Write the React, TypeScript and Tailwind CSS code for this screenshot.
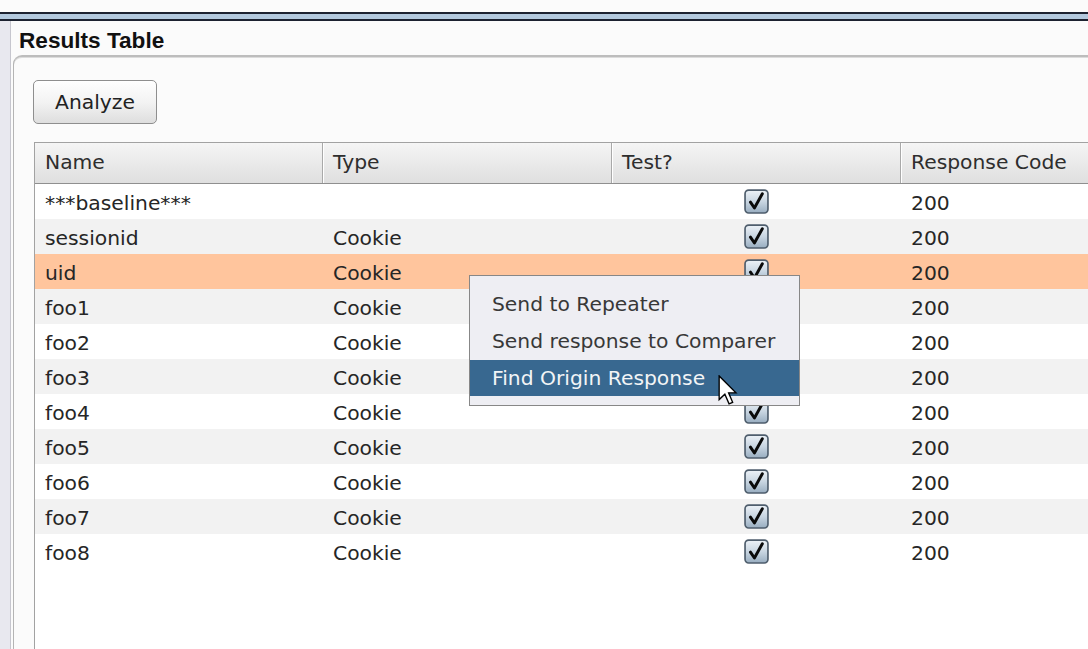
import React from "react";

const rows: { name: string; type: string }[] = [
  { name: "***baseline***", type: "" },
  { name: "sessionid", type: "Cookie" },
  { name: "uid", type: "Cookie" },
  { name: "foo1", type: "Cookie" },
  { name: "foo2", type: "Cookie" },
  { name: "foo3", type: "Cookie" },
  { name: "foo4", type: "Cookie" },
  { name: "foo5", type: "Cookie" },
  { name: "foo6", type: "Cookie" },
  { name: "foo7", type: "Cookie" },
  { name: "foo8", type: "Cookie" },
];

function CheckBox() {
  return (
    <svg width="25" height="25" viewBox="0 0 24 24">
      <defs>
        <linearGradient id="cbg" x1="0" y1="0" x2="0" y2="1">
          <stop offset="0" stopColor="#edf2f7" />
          <stop offset="0.5" stopColor="#c9d6e2" />
          <stop offset="1" stopColor="#98adc0" />
        </linearGradient>
      </defs>
      <rect x="1" y="1" width="22" height="22" rx="3.5" fill="url(#cbg)" stroke="#4f5e6d" strokeWidth="1.6" />
      <path d="M6.2 12.6 L10 18.2 L17.6 4.6" fill="none" stroke="#0a0a0a" strokeWidth="2.8" strokeLinecap="round" strokeLinejoin="round" />
    </svg>
  );
}

function Cursor() {
  return (
    <svg width="20" height="30" viewBox="0 0 13 20" className="absolute left-[718px] top-[375px]">
      <path d="M0.6 0.6 L0.6 16.4 L4.4 12.8 L7.2 19.2 L9.6 18.2 L6.9 11.9 L11.8 11.9 Z" fill="#ffffff" stroke="#000000" strokeWidth="0.9" strokeLinejoin="miter" />
    </svg>
  );
}

export default function App() {
  return (
    <div className="relative w-[1088px] h-[649px] overflow-hidden bg-[#fbfbfb] font-['DejaVu_Sans',sans-serif] text-[20.3px] text-[#262626]">
      <div className="h-[12px]" />
      <div className="h-[9px] border-y-2 border-[#1c2230] bg-[#b3c9de]" />
      <div className="flex h-[628px]">
        <div className="w-[11px] shrink-0 bg-[#e8e8ef] border-r border-[#c6c6ce]" />
        <div className="flex flex-1 flex-col min-w-0">
          <div className="h-[34px] shrink-0 pl-[8px] pt-[7px]">
            <div className="font-['Liberation_Sans',sans-serif] font-bold text-[22.6px] leading-[26px] text-[#111]">
              Results Table
            </div>
          </div>
          <div className="ml-[2px] flex flex-1 flex-col min-h-0 rounded-tl-[9px] border-l border-t-2 border-l-[#b4b4b4] border-t-[#bdbdbd] shadow-[inset_0_1px_0_#dcdcdc] pl-[20px] pt-[23px]">
            <button className="-ml-px h-[44px] w-[124px] shrink-0 rounded-[5px] border border-[#8e8e8e] bg-gradient-to-b from-[#fefefe] via-[#f3f3f3] to-[#dedede] text-[20.3px] text-[#222] shadow-[inset_0_1px_0_#ffffff]">
              Analyze
            </button>
            <div className="mt-[18px] flex flex-1 flex-col w-[1160px] border-l border-t border-[#a2a2a2] bg-white">
              <div className="flex h-[41px] shrink-0 border-b border-[#8f8f8f] bg-gradient-to-b from-[#f5f5f5] to-[#dfdfdf] text-[#2e2e2e]">
                <div className="flex w-[288px] items-center border-r border-[#a9a9a9] pl-[10px] pb-[1px] shadow-[1px_0_0_#ffffff]">Name</div>
                <div className="flex w-[289px] items-center border-r border-[#a9a9a9] pl-[10px] pb-[1px] shadow-[1px_0_0_#ffffff]">Type</div>
                <div className="flex w-[289px] items-center border-r border-[#a9a9a9] pl-[10px] pb-[1px] shadow-[1px_0_0_#ffffff]">Test?</div>
                <div className="flex w-[289px] items-center pl-[10px] pb-[1px]">Response Code</div>
              </div>
              {rows.map((r, i) => (
                <div
                  key={r.name}
                  className={
                    "flex h-[35px] shrink-0 " +
                    (i === 2 ? "bg-[#ffc59d]" : i % 2 === 1 ? "bg-[#f2f2f2]" : "bg-white")
                  }
                >
                  <div className="flex w-[288px] items-center pl-[10px] pt-[3px]">{r.name}</div>
                  <div className="flex w-[289px] items-center pl-[10px] pt-[3px]">{r.type}</div>
                  <div className="flex w-[289px] items-center justify-center pr-[1px]">
                    <CheckBox />
                  </div>
                  <div className="flex w-[289px] items-center pl-[10px] pt-[3px]">200</div>
                </div>
              ))}
            </div>
          </div>
        </div>
      </div>

      <div className="absolute left-[469px] top-[275px] w-[331px] border border-[#878787] bg-[#eeeef3] pt-[10px] pb-[9px] text-[#383838]">
        <div className="flex h-[37px] items-center pl-[22px]">Send to Repeater</div>
        <div className="flex h-[37px] items-center pl-[22px]">Send response to Comparer</div>
        <div className="flex h-[36px] items-center bg-[#386890] pl-[22px] text-[#f2f4f6]">Find Origin Response</div>
      </div>
      <Cursor />
    </div>
  );
}
